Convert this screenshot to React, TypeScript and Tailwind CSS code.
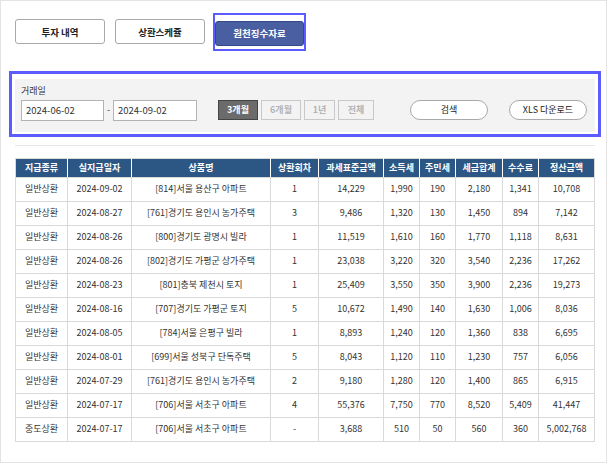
import React from 'react'

const FONT = { fontFamily: '"Noto Sans CJK KR", "Noto Sans", sans-serif' }

const headers = ['지급종류', '실지급일자', '상품명', '상환회차', '과세표준금액', '소득세', '주민세', '세금합계', '수수료', '정산금액']
const colWidths = [52, 64, 139, 48, 65, 36, 36, 47, 36, 56]

const rows: string[][] = [
  ['일반상환', '2024-09-02', '[814]서울 용산구 아파트', '1', '14,229', '1,990', '190', '2,180', '1,341', '10,708'],
  ['일반상환', '2024-08-27', '[761]경기도 용인시 농가주택', '3', '9,486', '1,320', '130', '1,450', '894', '7,142'],
  ['일반상환', '2024-08-26', '[800]경기도 광명시 빌라', '1', '11,519', '1,610', '160', '1,770', '1,118', '8,631'],
  ['일반상환', '2024-08-26', '[802]경기도 가평군 상가주택', '1', '23,038', '3,220', '320', '3,540', '2,236', '17,262'],
  ['일반상환', '2024-08-23', '[801]충북 제천시 토지', '1', '25,409', '3,550', '350', '3,900', '2,236', '19,273'],
  ['일반상환', '2024-08-16', '[707]경기도 가평군 토지', '5', '10,672', '1,490', '140', '1,630', '1,006', '8,036'],
  ['일반상환', '2024-08-05', '[784]서울 은평구 빌라', '1', '8,893', '1,240', '120', '1,360', '838', '6,695'],
  ['일반상환', '2024-08-01', '[699]서울 성북구 단독주택', '5', '8,043', '1,120', '110', '1,230', '757', '6,056'],
  ['일반상환', '2024-07-29', '[761]경기도 용인시 농가주택', '2', '9,180', '1,280', '120', '1,400', '865', '6,915'],
  ['일반상환', '2024-07-17', '[706]서울 서초구 아파트', '4', '55,376', '7,750', '770', '8,520', '5,409', '41,447'],
  ['중도상환', '2024-07-17', '[706]서울 서초구 아파트', '-', '3,688', '510', '50', '560', '360', '5,002,768'],
]

function TabButton({ label, active = false }: { label: string; active?: boolean }) {
  if (active) {
    return (
      <div className="relative">
        <button className="w-[89px] h-[25px] rounded-[3px] bg-[#4a5fa1] border border-[#34488a] text-white text-[9.5px] font-bold">
          {label}
        </button>
        {/* focus ring */}
        <div className="absolute -left-[2px] -right-[2px] -top-[5px] -bottom-[5px] border-2 border-[#5b5bff] pointer-events-none" />
      </div>
    )
  }
  return (
    <button className="w-[90px] h-[25px] rounded-[3px] bg-white border border-[#a9a9a9] text-[#222] text-[9.5px] font-bold">
      {label}
    </button>
  )
}

function PeriodButton({ label, active = false, w }: { label: string; active?: boolean; w: string }) {
  return (
    <button
      className={
        active
          ? `${w} h-[20px] bg-[#6b6b6b] border border-[#444] text-white text-[9px] font-bold`
          : `${w} h-[20px] bg-[#f3f3f3] border border-[#c8c8c8] text-[#b4b4b4] text-[9px] font-bold`
      }
    >
      {label}
    </button>
  )
}

export default function App() {
  return (
    <div style={FONT} className="w-[607px] h-[463px] border border-[#e4e4e4] bg-white">
      {/* 탭 */}
      <div className="flex items-center gap-[10px] pl-[14px] pt-[17px]">
        <TabButton label="투자 내역" />
        <TabButton label="상환스케쥴" />
        <TabButton label="원천징수자료" active />
      </div>

      {/* 검색 영역 */}
      <div className="relative mt-[33px] ml-[14px] w-[580px] h-[53px] bg-[#f3f3f3] pl-[6px] pr-[8px]">
        <div className="absolute -left-[6px] -right-[6px] -top-[8px] -bottom-[5px] border-[3px] border-[#5b5bff] pointer-events-none" />
        <div className="pt-[3px] text-[9px] text-[#333] leading-[18px]">거래일</div>
        <div className="flex items-center">
          <div className="w-[83px] h-[21px] bg-white border border-[#b3b3b3] pl-[4px] flex items-center text-[9.5px] text-[#333]">2024-06-02</div>
          <span className="w-[9px] text-center text-[9px] text-[#333]">-</span>
          <div className="w-[84px] h-[21px] bg-white border border-[#b3b3b3] pl-[4px] flex items-center text-[9.5px] text-[#333]">2024-09-02</div>
          <div className="ml-[21px] flex items-center gap-[3px]">
            <PeriodButton label="3개월" active w="w-[40px]" />
            <PeriodButton label="6개월" w="w-[40px]" />
            <PeriodButton label="1년" w="w-[31px]" />
            <PeriodButton label="전체" w="w-[36px]" />
          </div>
          <button className="ml-auto w-[78px] h-[20px] rounded-full bg-white border border-[#a9a9a9] text-[9px] text-[#222]">검색</button>
          <button className="ml-[21px] w-[78px] h-[20px] rounded-full bg-white border border-[#a9a9a9] text-[9px] text-[#222]">XLS 다운로드</button>
        </div>
      </div>

      <div className="mt-[13px] ml-[14px] w-[580px] h-px bg-[#e6e6e6]" />

      {/* 테이블 */}
      <table className="mt-[12px] ml-[14px] w-[580px] table-fixed border-collapse text-[9px]">
        <colgroup>
          {colWidths.map((w, i) => (
            <col key={i} style={{ width: w }} />
          ))}
        </colgroup>
        <thead>
          <tr>
            {headers.map((h) => (
              <th
                key={h}
                className="h-[19px] p-0 bg-[#2c5684] text-white font-bold text-[9px] border border-[#d9d9d9] border-r-white last:border-r-[#d9d9d9]"
              >
                {h}
              </th>
            ))}
          </tr>
        </thead>
        <tbody>
          {rows.map((r, i) => (
            <tr key={i}>
              {r.map((c, j) => (
                <td key={j} className="h-[24px] p-0 text-center text-[#333] border border-[#d9d9d9] whitespace-nowrap">
                  {c}
                </td>
              ))}
            </tr>
          ))}
        </tbody>
      </table>
    </div>
  )
}
